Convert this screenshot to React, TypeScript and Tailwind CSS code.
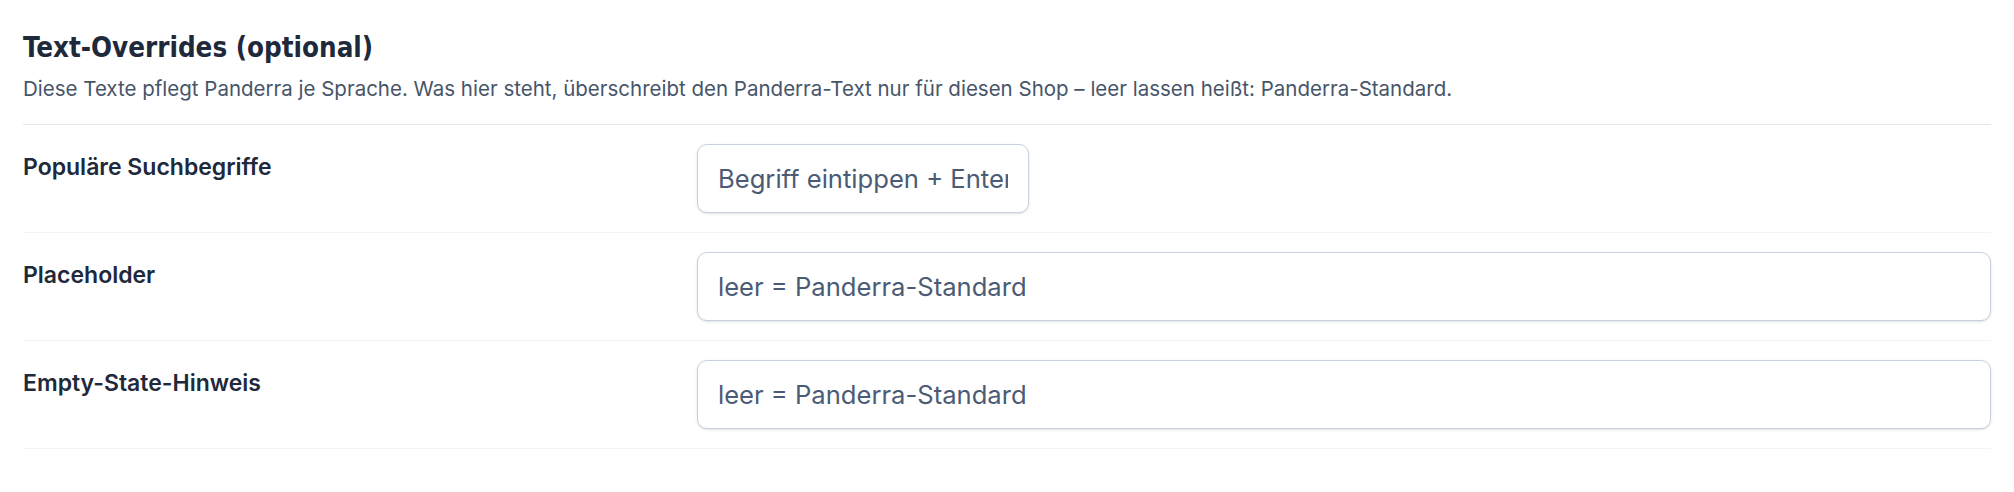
import React from 'react'

const rows = [
  { label: 'Populäre Suchbegriffe', placeholder: 'Begriff eintippen + Enter', narrow: true },
  { label: 'Placeholder', placeholder: 'leer = Panderra-Standard', narrow: false },
  { label: 'Empty-State-Hinweis', placeholder: 'leer = Panderra-Standard', narrow: false },
]

export default function App() {
  return (
    <div className="min-h-[492px] w-full bg-white px-[23px] pt-[30px] font-['Inter',sans-serif]">
      <div className="border-b border-[#e2e8f0] pb-[21px]">
        <h2 className="text-[27.5px] leading-[34px] font-bold text-[#1e293b] font-['DejaVu_Sans_Condensed','DejaVu_Sans',sans-serif] [font-stretch:condensed]">
          Text-Overrides (optional)
        </h2>
        <p className="mt-[11px] text-[20.5px] leading-[28px] text-[#475569]">
          Diese Texte pflegt Panderra je Sprache. Was hier steht, überschreibt den Panderra-Text nur für diesen Shop – leer lassen heißt: Panderra-Standard.
        </p>
      </div>

      {rows.map((row) => (
        <div
          key={row.label}
          className="grid grid-cols-[650px_1fr] gap-x-[24px] border-b border-[#f1f5f9] py-[19px]"
        >
          <label className="pt-[7px] text-[23px] leading-[32px] font-semibold text-[#1e293b]">
            {row.label}
          </label>
          <div>
            <input
              type="text"
              placeholder={row.placeholder}
              className={
                (row.narrow ? 'w-[332px] ' : 'w-full ') +
                'h-[69px] rounded-[10px] border border-[#c8d2df] bg-white px-[20px] text-[25.6px] text-[#1e293b] placeholder:text-[#4b5b75] shadow-sm outline-none'
              }
            />
          </div>
        </div>
      ))}
    </div>
  )
}
